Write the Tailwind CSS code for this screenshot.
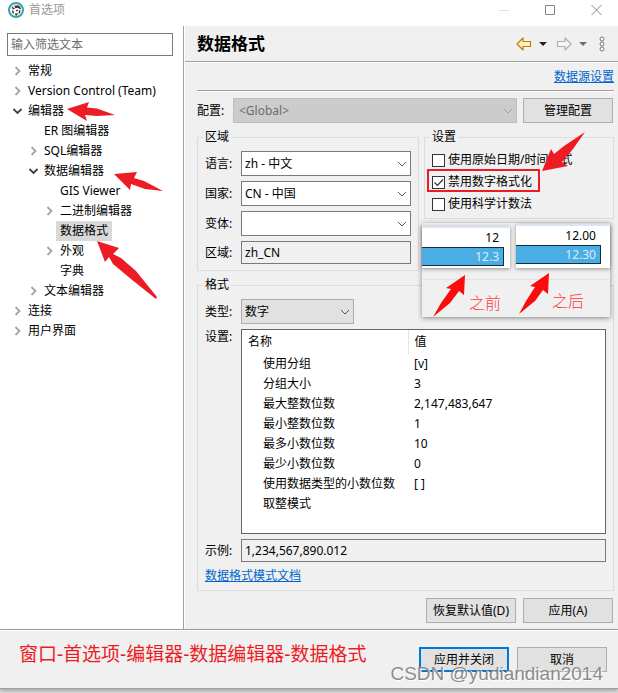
<!DOCTYPE html>
<html lang="zh-CN">

<head>
  <meta charset="UTF-8">
  <meta name="viewport" content="width=device-width, initial-scale=1.0">
  <title>首选项</title>
  <script src="https://cdn.jsdelivr.net/npm/@tailwindcss/browser@4"></script>
</head>

<body class="bg-white">
  <div class="min-h-screen flex flex-col bg-[#e4e4e4] text-xs text-black font-['Noto_Sans','Noto_Sans_CJK_SC',sans-serif]">

    <!-- Title bar -->
    <header class="h-[26px] flex items-start bg-white pl-2 pr-4">
      <svg class="w-4 h-4 mt-0.5" viewBox="0 0 16 16">
        <circle cx="8" cy="8" r="7" fill="#fff" stroke="#35a3b0" stroke-width="2" />
        <path d="M3.500 6Q4.500 3.500 7 3.500L10 3.200Q12.500 4 13 6.500L12 7.500 10.500 6 7.500 6 5.500 7.500z" fill="#4a3d38" />
        <path d="M4 8l1.500 1 .5 3-1.500-1zM8 8l1.500-.5.5 1.500-1.500.5zM11 8.500l1.500-.5-.5 3-1.500 1z" fill="#2e2624" />
        <path d="M7 11.500h3l-1 2H7.500z" fill="#2e2624" />
        <circle cx="6" cy="5" r="1" fill="#fff" />
      </svg>
      <h1 class="ml-[5px] h-5 leading-5 text-[#999]">首选项</h1>
      <div class="ml-auto flex gap-[35px] pt-1">
        <button aria-label="最小化"><svg class="w-[11px] h-3" viewBox="0 0 11 12"><path d="M0 6.500h10" stroke="#e3e3e3" /></svg></button>
        <button aria-label="最大化"><svg class="w-[11px] h-3" viewBox="0 0 11 12"><path d="M.5 1.500h9v9h-9z" fill="none" stroke="#888" /></svg></button>
        <button aria-label="关闭"><svg class="w-[11px] h-3" viewBox="0 0 11 12"><path d="M.5 1l10 10M10.500 1l-10 10" stroke="#888" /></svg></button>
      </div>
    </header>

    <div class="flex flex-1 border-b border-[#a0a0a0]">
      <!-- Preference tree -->
      <aside class="relative w-[184px] shrink-0 bg-white border-r border-[#a0a0a0] pt-[7px]">
        <input type="text" aria-label="筛选" placeholder="输入筛选文本"
          class="block ml-[7px] w-[166px] h-[23px] mb-[5px] px-[3px] border border-[#7a7a7a] placeholder:text-[#6d6d6d]">
        <ul class="leading-5">
          <li class="flex items-center h-5 pl-3">
            <svg class="w-3 h-3" viewBox="0 0 12 12"><path d="M3.500 2l4 4-4 4" fill="none" stroke="#a6a6a6" stroke-width="1.800" /></svg>
            <span class="px-1">常规</span>
          </li>
          <li class="flex items-center h-5 pl-3">
            <svg class="w-3 h-3" viewBox="0 0 12 12"><path d="M3.500 2l4 4-4 4" fill="none" stroke="#a6a6a6" stroke-width="1.800" /></svg>
            <span class="px-1">Version Control (Team)</span>
          </li>
          <li class="flex items-center h-5 pl-3">
            <svg class="w-3 h-3" viewBox="0 0 12 12"><path d="M1.500 4l4 4 4-4" fill="none" stroke="#404040" stroke-width="1.800" /></svg>
            <span class="px-1">编辑器</span>
          </li>
          <li class="flex items-center h-5 pl-10"><span class="px-1">ER 图编辑器</span></li>
          <li class="flex items-center h-5 pl-7">
            <svg class="w-3 h-3" viewBox="0 0 12 12"><path d="M3.500 2l4 4-4 4" fill="none" stroke="#a6a6a6" stroke-width="1.800" /></svg>
            <span class="px-1">SQL编辑器</span>
          </li>
          <li class="flex items-center h-5 pl-7">
            <svg class="w-3 h-3" viewBox="0 0 12 12"><path d="M1.500 4l4 4 4-4" fill="none" stroke="#404040" stroke-width="1.800" /></svg>
            <span class="px-1">数据编辑器</span>
          </li>
          <li class="flex items-center h-5 pl-14"><span class="px-1">GIS Viewer</span></li>
          <li class="flex items-center h-5 pl-11">
            <svg class="w-3 h-3" viewBox="0 0 12 12"><path d="M3.500 2l4 4-4 4" fill="none" stroke="#a6a6a6" stroke-width="1.800" /></svg>
            <span class="px-1">二进制编辑器</span>
          </li>
          <li class="flex items-center h-5 pl-14"><span class="h-5 px-1 bg-[#d9d9d9]">数据格式</span></li>
          <li class="flex items-center h-5 pl-11">
            <svg class="w-3 h-3" viewBox="0 0 12 12"><path d="M3.500 2l4 4-4 4" fill="none" stroke="#a6a6a6" stroke-width="1.800" /></svg>
            <span class="px-1">外观</span>
          </li>
          <li class="flex items-center h-5 pl-14"><span class="px-1">字典</span></li>
          <li class="flex items-center h-5 pl-7">
            <svg class="w-3 h-3" viewBox="0 0 12 12"><path d="M3.500 2l4 4-4 4" fill="none" stroke="#a6a6a6" stroke-width="1.800" /></svg>
            <span class="px-1">文本编辑器</span>
          </li>
          <li class="flex items-center h-5 pl-3">
            <svg class="w-3 h-3" viewBox="0 0 12 12"><path d="M3.500 2l4 4-4 4" fill="none" stroke="#a6a6a6" stroke-width="1.800" /></svg>
            <span class="px-1">连接</span>
          </li>
          <li class="flex items-center h-5 pl-3">
            <svg class="w-3 h-3" viewBox="0 0 12 12"><path d="M3.500 2l4 4-4 4" fill="none" stroke="#a6a6a6" stroke-width="1.800" /></svg>
            <span class="px-1">用户界面</span>
          </li>
        </ul>
        <!-- Arrows pointing at the path to follow -->
        <svg class="absolute left-0 top-0 w-[184px] h-[280px] pointer-events-none" viewBox="0 26 184 280" fill="#ed1c24">
          <path d="M67 109L89 102 87 107.500 97 108.500 115 115 97 116 85 115 87 121z" />
          <path d="M114 174L137 172 134 178 144 181 163 191 145 189 131 184 130 190z" />
          <path d="M97 241L119 248 113 254 121 258 136 271 157 297 156 299 131 279 113 264 109 257 105 262z" />
        </svg>
      </aside>

      <!-- Preference page -->
      <main class="flex-1 min-w-0 bg-[#f0f0f0] border-l border-white">
        <div class="h-9 flex items-center pl-3 pr-[13px] border-b border-[#a0a0a0]">
          <h2 class="text-[17px] leading-6 font-bold">数据格式</h2>
          <div class="ml-auto flex items-center">
            <button aria-label="后退"><svg class="w-4 h-4" viewBox="0 0 16 16"><path d="M1 8L7 2V5.500h7.500v5H7V14z" fill="#fdf0b4" stroke="#bd7d12" stroke-width="1.200" stroke-linejoin="round" /></svg></button>
            <button aria-label="后退历史" class="ml-[7px]"><svg class="w-2 h-4" viewBox="0 0 8 16"><path d="M0 6h8L4 10z" fill="#222" /></svg></button>
            <button aria-label="前进" class="ml-[9px]"><svg class="w-4 h-4" viewBox="0 0 16 16"><path d="M15 8L9 2V5.500H1.500v5H9V14z" fill="#f6f6f6" stroke="#b0b0b0" stroke-width="1.200" stroke-linejoin="round" /></svg></button>
            <button aria-label="前进历史" class="ml-[7px]"><svg class="w-2 h-4" viewBox="0 0 8 16"><path d="M0 6h8L4 10z" fill="#6e6e6e" /></svg></button>
            <button aria-label="菜单" class="ml-3"><svg class="w-[6px] h-4" viewBox="0 0 6 16" fill="#fff" stroke="#777"><circle cx="3" cy="3" r="2" /><circle cx="3" cy="8" r="2" /><circle cx="3" cy="13" r="2" /></svg></button>
          </div>
        </div>

        <div class="border-t border-white pl-3 pr-1 pb-1.5">
          <div class="h-7 flex items-center justify-end border-b border-[#a0a0a0]">
            <a href="#" class="leading-4 text-[#0066cc] underline">数据源设置</a>
          </div>

          <div class="flex items-center gap-1.5 pt-1.5 pr-px border-t border-white">
            <label for="profile" class="w-[30px]">配置:</label>
            <div class="relative flex-1">
              <select id="profile" disabled class="block w-full h-[25px] appearance-none px-[5px] border border-[#bfbfbf] bg-[#cccccc] text-[#6d6d6d] opacity-100">
                <option>&lt;Global&gt;</option>
              </select>
              <svg class="absolute right-1 top-2 w-[10px] h-[10px] pointer-events-none" viewBox="0 0 10 10"><path d="M1 3l4 4 4-4" fill="none" stroke="#a0a0a0" /></svg>
            </div>
            <button class="w-[90px] h-[25px] border border-[#adadad] bg-[#e1e1e1]">管理配置</button>
          </div>

          <div class="flex items-start gap-[5px] mt-1.5">
            <fieldset class="flex-1 min-w-0 border border-[#dcdcdc] px-[7px] pb-1.5">
              <legend class="h-4 leading-4 px-0.5 -ml-0.5">区域</legend>
              <div class="grid grid-cols-[36px_1fr] items-center gap-y-[5px] pt-1.5">
                <label for="language">语言:</label>
                <div class="relative">
                  <select id="language" class="block w-full h-[25px] appearance-none px-[3px] border border-[#7a7a7a] bg-white">
                    <option>zh - 中文</option>
                  </select>
                  <svg class="absolute right-1 top-2 w-[10px] h-[10px] pointer-events-none" viewBox="0 0 10 10"><path d="M1 3l4 4 4-4" fill="none" stroke="#555" /></svg>
                </div>
                <label for="country">国家:</label>
                <div class="relative">
                  <select id="country" class="block w-full h-[25px] appearance-none px-[3px] border border-[#7a7a7a] bg-white">
                    <option>CN - 中国</option>
                  </select>
                  <svg class="absolute right-1 top-2 w-[10px] h-[10px] pointer-events-none" viewBox="0 0 10 10"><path d="M1 3l4 4 4-4" fill="none" stroke="#555" /></svg>
                </div>
                <label for="variant">变体:</label>
                <div class="relative">
                  <select id="variant" class="block w-full h-[25px] appearance-none px-[3px] border border-[#7a7a7a] bg-white">
                    <option></option>
                  </select>
                  <svg class="absolute right-1 top-2 w-[10px] h-[10px] pointer-events-none" viewBox="0 0 10 10"><path d="M1 3l4 4 4-4" fill="none" stroke="#555" /></svg>
                </div>
                <label for="locale">区域:</label>
                <input id="locale" type="text" readonly value="zh_CN" class="w-full h-[23px] px-[3px] border border-[#7a7a7a] bg-[#f0f0f0]">
              </div>
            </fieldset>

            <div class="relative w-[190px] shrink-0">
              <fieldset class="border border-[#dcdcdc] px-[7px] pt-1 pb-[3px]">
                <legend class="h-4 leading-4 px-0.5 -ml-0.5">设置</legend>
                <label class="flex items-center gap-[3px] h-[22px]">
                  <input type="checkbox" class="appearance-none w-[13px] h-[13px] border border-[#333] bg-white">
                  使用原始日期/时间格式
                </label>
                <label class="relative flex items-center gap-[3px] h-[22px]">
                  <input type="checkbox" checked class="appearance-none w-[13px] h-[13px] border border-[#333] bg-white">
                  <svg class="absolute left-0 w-[13px] h-[13px] pointer-events-none" viewBox="0 0 13 13"><path d="M2.500 6.500l3 3 5.500-6" fill="none" stroke="#333" stroke-width="1.200" /></svg>
                  禁用数字格式化
                </label>
                <label class="flex items-center gap-[3px] h-[22px]">
                  <input type="checkbox" class="appearance-none w-[13px] h-[13px] border border-[#333] bg-white">
                  使用科学计数法
                </label>
              </fieldset>

              <!-- Highlight box and arrow -->
              <div class="absolute left-[3px] top-10 w-[113px] h-[23px] border-2 border-[#ed1c24] pointer-events-none"></div>
              <svg class="absolute left-[118px] top-0.5 w-12 h-11 pointer-events-none" viewBox="542 131 48 44" fill="#ed1c24">
                <path d="M542 171L551 149 554 154 564 146 585 132 573 149 562 162 568 166z" />
              </svg>

              <!-- Before / after comparison -->
              <div class="absolute -left-0.5 top-[94px] z-10 w-[188px] h-[94px] bg-[#f0f0f0] shadow-[0_1px_5px_rgba(0,0,0,0.45)]">
                <div class="flex items-start gap-1.5">
                  <div class="w-[88px] mt-[3px] pb-0.5 pr-1.5 bg-white border-t-2 border-[#dbe5f1] shadow-[0_1px_4px_rgba(0,0,0,0.4)] text-right">
                    <div class="h-[19px] leading-[19px] pr-[5px]">12</div>
                    <div class="h-[19px] leading-[17px] pr-1 border border-l-0 border-[#14303f] bg-[#4aade3] text-[#d6edf9]">12.3</div>
                  </div>
                  <div class="w-[94px] mt-px pb-1 pr-[9px] bg-white border-t-2 border-[#dbe5f1] shadow-[0_1px_4px_rgba(0,0,0,0.4)] text-right">
                    <div class="h-[19px] leading-[19px] pr-[5px]">12.00</div>
                    <div class="h-[19px] leading-[17px] pr-1 border border-l-0 border-[#14303f] bg-[#4aade3] text-[#d6edf9]">12.30</div>
                  </div>
                </div>
                <svg class="absolute left-0 top-0 w-[188px] h-[94px]" viewBox="422 223 188 94" fill="#fb0d0d">
                  <path d="M422 279.500h188" stroke="#e2e2e2" />
                  <path d="M465 275L464 295 459 291 450 303 433 317 441 303 451 289 446 288z" />
                  <path d="M549 273L548 294 543 290 535 301 519 314 526 301 535 287 530 286z" />
                </svg>
                <span class="absolute left-[47px] top-[70px] text-base leading-5 font-light text-[#ff3b3b]">之前</span>
                <span class="absolute left-[130px] top-[68px] text-base leading-5 font-light text-[#ff3b3b]">之后</span>
              </div>
            </div>
          </div>

          <fieldset class="min-w-0 mt-1.5 border border-[#dcdcdc] px-[7px] pb-[5px]">
            <legend class="h-4 leading-4 px-0.5 -ml-0.5">格式</legend>
            <div class="grid grid-cols-[36px_1fr] items-center gap-y-[5px] pt-1.5">
              <label for="type">类型:</label>
              <div class="relative w-[113px]">
                <select id="type" class="block w-full h-[25px] appearance-none px-[3px] border border-[#adadad] bg-[#e1e1e1]">
                  <option>数字</option>
                </select>
                <svg class="absolute right-1 top-2 w-[10px] h-[10px] pointer-events-none" viewBox="0 0 10 10"><path d="M1 3l4 4 4-4" fill="none" stroke="#555" /></svg>
              </div>
              <span class="self-start leading-4">设置:</span>
              <div class="min-h-[205px] border border-[#646464] bg-white">
                <table class="w-full text-left leading-5">
                  <thead>
                    <tr class="h-6">
                      <th class="w-[166px] pl-1.5 font-normal border-r border-[#e5e5e5]">名称</th>
                      <th class="pl-1.5 font-normal">值</th>
                    </tr>
                  </thead>
                  <tbody>
                    <tr><td class="pl-[21px]">使用分组</td><td class="pl-1.5">[v]</td></tr>
                    <tr><td class="pl-[21px]">分组大小</td><td class="pl-1.5">3</td></tr>
                    <tr><td class="pl-[21px]">最大整数位数</td><td class="pl-1.5">2,147,483,647</td></tr>
                    <tr><td class="pl-[21px]">最小整数位数</td><td class="pl-1.5">1</td></tr>
                    <tr><td class="pl-[21px]">最多小数位数</td><td class="pl-1.5">10</td></tr>
                    <tr><td class="pl-[21px]">最少小数位数</td><td class="pl-1.5">0</td></tr>
                    <tr><td class="pl-[21px]">使用数据类型的小数位数</td><td class="pl-1.5">[ ]</td></tr>
                    <tr><td class="pl-[21px]">取整模式</td><td class="pl-1.5"></td></tr>
                  </tbody>
                </table>
              </div>
              <label for="sample">示例:</label>
              <input id="sample" type="text" readonly value="1,234,567,890.012" class="w-full h-[23px] px-[3px] border border-[#7a7a7a] bg-[#f0f0f0]">
              <a href="#" class="col-span-2 justify-self-start h-[18px] leading-[18px] text-[#0066cc] underline">数据格式模式文档</a>
            </div>
          </fieldset>

          <div class="flex justify-end gap-[7px] mt-[7px] pr-px">
            <button class="w-[90px] h-[25px] border border-[#adadad] bg-[#e1e1e1]">恢复默认值(D)</button>
            <button class="w-[90px] h-[25px] border border-[#adadad] bg-[#e1e1e1]">应用(A)</button>
          </div>
        </div>
      </main>
    </div>

    <!-- Dialog buttons -->
    <footer class="relative flex items-center gap-2 h-[59px] mb-1 pl-[19px] pr-[11px] bg-[#f0f0f0] border-t border-t-white border-b border-b-[#a0a0a0] shadow-[0_2px_4px_rgba(0,0,0,0.3)]">
      <p class="mr-auto pb-3 text-[19px] leading-6 text-[#ed1c24] whitespace-nowrap">窗口-首选项-编辑器-数据编辑器-数据格式</p>
      <button class="w-[90px] h-[25px] shrink-0 border-2 border-[#0078d7] bg-[#e1e1e1]">应用并关闭</button>
      <button class="w-[90px] h-[25px] shrink-0 border border-[#adadad] bg-[#e1e1e1]">取消</button>
      <span class="absolute right-[15px] bottom-0.5 font-['Liberation_Sans',sans-serif] text-[19px] leading-6 text-[#8c8c8c] text-shadow-[1px_1px_0_#ffffff] pointer-events-none">CSDN @yudiandian2014</span>
    </footer>
  </div>
</body>

</html>
